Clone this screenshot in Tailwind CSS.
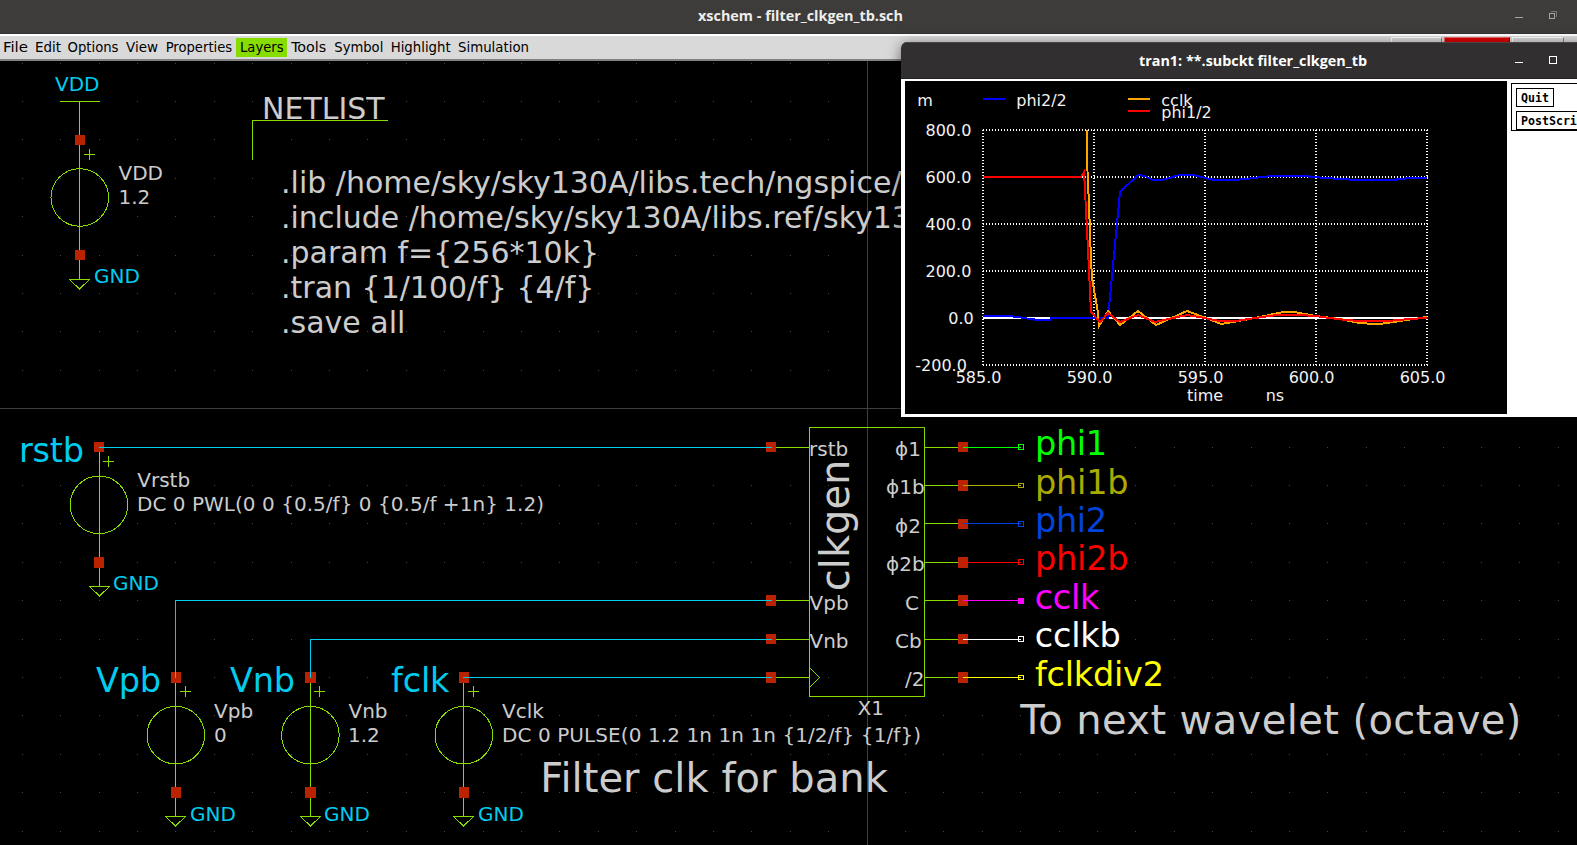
<!DOCTYPE html>
<html lang="en">
<head>
<meta charset="utf-8">
<title>xschem - filter_clkgen_tb.sch</title>
<script src="https://cdn.jsdelivr.net/npm/@tailwindcss/browser@4"></script>
</head>
<body class="relative flex h-[845px] w-[1577px] flex-col overflow-hidden bg-black font-['DejaVu_Sans',sans-serif]">

<!-- main window title bar -->
<header class="relative flex h-[34px] shrink-0 items-center justify-center border-b border-[#37323a] bg-[#3e3c3a]">
  <svg class="absolute inset-0" width="1577" height="33" viewBox="0 0 1577 33">
    <text x="698" y="21" textLength="205" lengthAdjust="spacingAndGlyphs" class="fill-[#eeeeec] font-['Open_Sans',sans-serif] text-[13.5px] font-bold">xschem - filter_clkgen_tb.sch</text>
    <g fill="none" stroke="#a5a4a2" shape-rendering="crispEdges">
      <path d="M1515 17.5H1523"/>
      <rect x="1549.5" y="13.5" width="5" height="5"/>
      <path d="M1551 11.5H1556.5V17" stroke="#777674"/>
    </g>
  </svg>
</header>

<!-- menu bar -->
<nav class="flex h-[27px] shrink-0 justify-between border-t-2 border-b-2 border-t-white border-b-[#828282] bg-[#d9d9d9]">
  <svg width="540" height="23" viewBox="0 36 540 23">
    <rect x="236" y="38" width="51" height="19" fill="#88dd00"/>
    <g class="fill-black font-['DejaVu_Sans_Condensed','DejaVu_Sans',sans-serif] text-[14px] font-stretch-condensed">
      <text x="3" y="52" textLength="25" lengthAdjust="spacingAndGlyphs">File</text>
      <text x="35" y="52" textLength="26" lengthAdjust="spacingAndGlyphs">Edit</text>
      <text x="67.5" y="52" textLength="51" lengthAdjust="spacingAndGlyphs">Options</text>
      <text x="126" y="52" textLength="32" lengthAdjust="spacingAndGlyphs">View</text>
      <text x="165.7" y="52" textLength="66.500" lengthAdjust="spacingAndGlyphs">Properties</text>
      <text x="240" y="52" textLength="43.500" lengthAdjust="spacingAndGlyphs">Layers</text>
      <text x="291.300" y="52" textLength="35" lengthAdjust="spacingAndGlyphs">Tools</text>
      <text x="334.300" y="52" textLength="49" lengthAdjust="spacingAndGlyphs">Symbol</text>
      <text x="390.7" y="52" textLength="60" lengthAdjust="spacingAndGlyphs">Highlight</text>
      <text x="458" y="52" textLength="71" lengthAdjust="spacingAndGlyphs">Simulation</text>
    </g>
  </svg>
  <div class="flex h-full gap-[2px] pt-px pr-[13px]">
    <div class="w-[51px] border border-t-white border-r-[#828282] border-l-white"></div>
    <div class="w-[66px] border border-t-[#ee6666] border-r-[#880000] border-l-[#ee6666] bg-[#dd0000]"></div>
    <div class="w-[52px] border border-t-white border-r-[#828282] border-l-white"></div>
  </div>
</nav>

<!-- schematic -->
<main class="h-[784px]">
<svg width="1577" height="784" viewBox="0 61 1577 784">
  <defs>
    <g id="src" fill="none" stroke="#88dd00" shape-rendering="crispEdges">
      <path d="M.5 0V139M-9.500 139.500H10.500L.5 149Z"/>
    </g>
    <path id="plus" d="M0 5.500H11M5.500 0V11" fill="none" stroke="#88dd00" shape-rendering="crispEdges"/>
  </defs>
  <g id="dots" fill="#454545" shape-rendering="crispEdges"></g>
  <path d="M0 408.500H1577M867.5 61V845" stroke="#404040" shape-rendering="crispEdges"/>

  <!-- component outlines -->
  <use href="#src" x="79" y="140"/>
  <use href="#src" x="99" y="447"/>
  <use href="#src" x="175" y="677"/>
  <use href="#src" x="310" y="677"/>
  <use href="#src" x="463" y="677"/>
  <use href="#plus" x="84" y="149"/>
  <use href="#plus" x="103" y="456"/>
  <use href="#plus" x="180" y="686"/>
  <use href="#plus" x="314" y="686"/>
  <use href="#plus" x="468" y="686"/>
  <g fill="none" stroke="#88dd00" shape-rendering="crispEdges">
    <circle cx="79.8" cy="197.500" r="28.8"/>
    <circle cx="99" cy="504.800" r="28.8"/>
    <circle cx="175.8" cy="735.200" r="28.8"/>
    <circle cx="310.4" cy="735.200" r="28.8"/>
    <circle cx="463.800" cy="735.200" r="28.8"/>
    <path d="M60 101.500H100M79.500 101V140"/>
    <path d="M388 120.500H252.500V160"/>
    <rect x="809.5" y="427.500" width="115" height="269"/>
    <path d="M771 447.500H809M771 600.500H809M771 639.500H809M771 677.500H809"/>
    <path d="M925 447.500H963M925 485.500H963M925 523.500H963M925 562.500H963M925 600.500H963M925 639.500H963M925 677.500H963"/>
    <path d="M810 668L819.500 677.500L810 687"/>
  </g>

  <!-- pins -->
  <g fill="#bb2200" shape-rendering="crispEdges">
    <rect x="75" y="135" width="10" height="10"/><rect x="75" y="250" width="10" height="10"/>
    <rect x="94" y="442" width="10" height="10"/><rect x="94" y="557" width="10" height="11"/>
    <rect x="171" y="672" width="10" height="11"/><rect x="171" y="787" width="10" height="11"/>
    <rect x="305" y="672" width="11" height="11"/><rect x="305" y="787" width="11" height="11"/>
    <rect x="459" y="672" width="10" height="11"/><rect x="459" y="787" width="10" height="11"/>
    <rect x="766" y="442" width="10" height="10"/><rect x="766" y="595" width="10" height="11"/>
    <rect x="766" y="634" width="10" height="10"/><rect x="766" y="672" width="10" height="11"/>
    <rect x="958" y="442" width="10" height="10"/><rect x="958" y="480" width="10" height="11"/>
    <rect x="958" y="519" width="10" height="10"/><rect x="958" y="557" width="10" height="11"/>
    <rect x="958" y="595" width="10" height="11"/><rect x="958" y="634" width="10" height="10"/>
    <rect x="958" y="672" width="10" height="11"/>
  </g>

  <!-- wires -->
  <g fill="none" stroke="#00ccee" shape-rendering="crispEdges">
    <path d="M99 447.500H772M175.500 678V600.500H772M310.500 678V639.500H772M463 677.500H772"/>
  </g>
  <g fill="none" shape-rendering="crispEdges">
    <g stroke="#00ff00"><path d="M963 447.500H1021"/><rect x="1018.5" y="444.500" width="5" height="5"/></g>
    <g stroke="#aaaa00"><path d="M963 485.500H1021"/><rect x="1018.5" y="483.500" width="5" height="4"/></g>
    <g stroke="#0044dd"><path d="M963 523.500H1021"/><rect x="1018.5" y="521.500" width="5" height="5"/></g>
    <g stroke="#ff0000"><path d="M963 562.500H1021"/><rect x="1018.5" y="559.500" width="5" height="5"/></g>
    <g stroke="#ff00ff"><path d="M963 600.500H1021"/><rect x="1018.5" y="598.500" width="5" height="5" fill="#ff00ff"/></g>
    <g stroke="#ffffff"><path d="M963 639.500H1021"/><rect x="1018.5" y="636.500" width="5" height="5"/></g>
    <g stroke="#ffff00"><path d="M963 677.500H1021"/><rect x="1018.5" y="675.500" width="5" height="4"/></g>
  </g>

  <!-- small labels -->
  <g class="fill-[#cccccc] text-[20px]">
    <text x="118.500" y="180">VDD</text><text x="118.500" y="204">1.2</text>
    <text x="137.300" y="487">Vrstb</text><text x="137" y="511" textLength="407">DC 0 PWL(0 0 {0.5/f} 0 {0.5/f +1n} 1.2)</text>
    <text x="214" y="718">Vpb</text><text x="214" y="742">0</text>
    <text x="348.500" y="718">Vnb</text><text x="348" y="742">1.2</text>
    <text x="502" y="718">Vclk</text><text x="502" y="742" textLength="419">DC 0 PULSE(0 1.2 1n 1n 1n {1/2/f} {1/f})</text>
    <text x="809" y="456">rstb</text><text x="809.5" y="610">Vpb</text><text x="809.5" y="648">Vnb</text>
    <text x="895" y="456">ϕ1</text><text x="886" y="494">ϕ1b</text>
    <text x="895" y="533">ϕ2</text><text x="886" y="571">ϕ2b</text>
    <text x="905" y="610">C</text><text x="895" y="648">Cb</text><text x="905" y="686">/2</text>
    <text x="857.500" y="715">X1</text>
  </g>
  <g class="fill-[#00ccee] text-[20px]">
    <text x="55" y="91">VDD</text><text x="94" y="283">GND</text><text x="113" y="590">GND</text>
    <text x="190" y="821">GND</text><text x="324" y="821">GND</text><text x="478" y="821">GND</text>
  </g>

  <!-- net names -->
  <g class="fill-[#00ccee] text-[33.5px]">
    <text x="19" y="462" textLength="65">rstb</text><text x="96" y="692" textLength="65">Vpb</text><text x="230" y="692" textLength="65">Vnb</text><text x="391" y="692" textLength="58.500">fclk</text>
  </g>
  <g class="text-[33.5px]">
    <text x="1035" y="455" textLength="72" class="fill-[#00ff00]">phi1</text>
    <text x="1035" y="494" textLength="93.500" class="fill-[#aaaa00]">phi1b</text>
    <text x="1035" y="532" textLength="72" class="fill-[#0044dd]">phi2</text>
    <text x="1035" y="570" textLength="93.500" class="fill-[#ff0000]">phi2b</text>
    <text x="1034.800" y="609" textLength="64.500" class="fill-[#ff00ff]">cclk</text>
    <text x="1034.800" y="647" textLength="86" class="fill-white">cclkb</text>
    <text x="1035" y="686" textLength="129" class="fill-[#ffff00]">fclkdiv2</text>
  </g>

  <!-- netlist block -->
  <g class="fill-[#cccccc] text-[30px]">
    <text x="262" y="119">NETLIST</text>
    <text x="281" y="193" textLength="620.500">.lib /home/sky/sky130A/libs.tech/ngspice/</text>
    <text x="281" y="228">.include /home/sky/sky130A/libs.ref/sky130</text>
    <text x="281" y="263">.param f={256*10k}</text>
    <text x="281" y="298">.tran {1/100/f} {4/f}</text>
    <text x="281" y="333">.save all</text>
  </g>
  <g class="fill-[#cccccc] text-[40px]">
    <text transform="translate(849 591.2) rotate(-90)">clkgen</text>
    <text x="540.300" y="792" textLength="347.500">Filter clk for bank</text>
    <text x="1020.300" y="734" textLength="501">To next wavelet (octave)</text>
  </g>
</svg>
</main>

<!-- plot window -->
<section class="absolute top-[42px] left-[901px] flex h-[375px] w-[700px] flex-col overflow-hidden rounded-t-[6px] bg-white shadow-[0_3px_14px_rgba(0,0,0,0.55)]">
  <div class="h-[37px] shrink-0 border-t border-b border-t-[#484646] border-b-[#232122] bg-[#322f30]">
    <svg width="676" height="35" viewBox="901 43 676 35">
      <text x="1139" y="66" textLength="228" lengthAdjust="spacingAndGlyphs" class="fill-white font-['Open_Sans',sans-serif] text-[13.5px] font-bold">tran1: **.subckt filter_clkgen_tb</text>
      <g fill="none" stroke="#ffffff" shape-rendering="crispEdges">
        <path d="M1515 62.500H1523"/><rect x="1549.5" y="56.500" width="7" height="7"/>
      </g>
    </svg>
  </div>
  <div class="flex gap-1 pt-[2px] pl-1">
    <div class="h-[333px] w-[602px] shrink-0 bg-black">
      <svg width="602" height="333" viewBox="905 81 602 333">
        <g fill="none" stroke="#ffffff" stroke-width="2" stroke-dasharray="1 2" shape-rendering="crispEdges">
          <path d="M983 130H1428M983 177H1428M983 224H1428M983 271H1428M983 365H1428"/>
          <path d="M983 130V366M1094 130V366M1205 130V366M1316 130V366M1427 130V366"/>
        </g>
        <path d="M983 318H1427" stroke="#ffffff" stroke-width="2" shape-rendering="crispEdges"/>
        <g fill="none" stroke-width="2" shape-rendering="crispEdges">
          <path stroke="#0000ff" d="M983 99H1005M983 316H1008L1018 317L1030 319L1039 320H1050L1051 318H1108L1114 255L1120 192L1138 175L1145 176L1153 180H1162L1180 175H1193L1205 178L1215 180H1234L1247 179L1261 177L1274 176H1304L1314 177L1325 178L1340 179L1357 180H1392L1410 178H1427"/>
          <path stroke="#ffa500" d="M1128 99H1150M1087 130V160L1089 205L1091 260L1092 278L1098 313L1099 326L1108 311L1120 325L1138 311L1156 325L1187 311L1206 318L1221 324L1233 322L1260 317L1283 312H1294L1316 316L1340 319L1360 323L1373 324H1380L1400 321L1427 317"/>
          <path stroke="#ff0000" d="M1128 111H1150M983 177H1081L1084 172L1085 190L1087 230L1089 270L1091 312L1100 322L1108 313L1120 322L1138 315L1155 322L1187 315L1205 318L1219 321H1236L1255 318L1277 315H1300L1315 316L1330 318L1346 320L1360 321H1388L1410 319L1427 318"/>
        </g>
        <g class="fill-[#f2f2f2] text-[16px]">
          <text x="917.300" y="106">m</text><text x="1016.300" y="106">phi2/2</text><text x="1161.300" y="106">cclk</text><text x="1161.300" y="118">phi1/2</text>
          <text x="925.500" y="136">800.0</text><text x="925.500" y="183">600.0</text><text x="925.500" y="230">400.0</text><text x="925.500" y="277">200.0</text>
          <text x="948.300" y="324">0.0</text><text x="915.300" y="371">-200.0</text>
          <text x="955.700" y="383">585.0</text><text x="1066.700" y="383">590.0</text><text x="1177.700" y="383">595.0</text><text x="1288.700" y="383">600.0</text><text x="1399.700" y="383">605.0</text>
          <text x="1187" y="401">time</text><text x="1265.700" y="401">ns</text>
        </g>
      </svg>
    </div>
    <div class="mt-[2px] flex h-[48px] w-[90px] shrink-0 flex-col items-start gap-1 border border-black pt-1 pl-1 font-['DejaVu_Sans_Mono',monospace] text-[11.6px] font-bold text-black">
      <div class="h-[19px] w-[38px] shrink-0 border border-black pl-1 leading-[19px]">Quit</div>
      <div class="h-[19px] w-[85px] shrink-0 border border-black pl-1 leading-[19px]">PostScript</div>
    </div>
  </div>
</section>

<script>
  // Snap-grid dots: 38.4px pitch, aligned to whole pixels.
  const dots = document.getElementById('dots');
  for (let j = 0; j < 21; j++) {
    for (let i = 0; i < 41; i++) {
      const r = document.createElementNS('http://www.w3.org/2000/svg', 'rect');
      r.setAttribute('x', Math.floor(22.3 + 38.4 * i));
      r.setAttribute('y', Math.floor(63 + 38.4 * j));
      r.setAttribute('width', 1);
      r.setAttribute('height', 1);
      dots.appendChild(r);
    }
  }
</script>
</body>
</html>
